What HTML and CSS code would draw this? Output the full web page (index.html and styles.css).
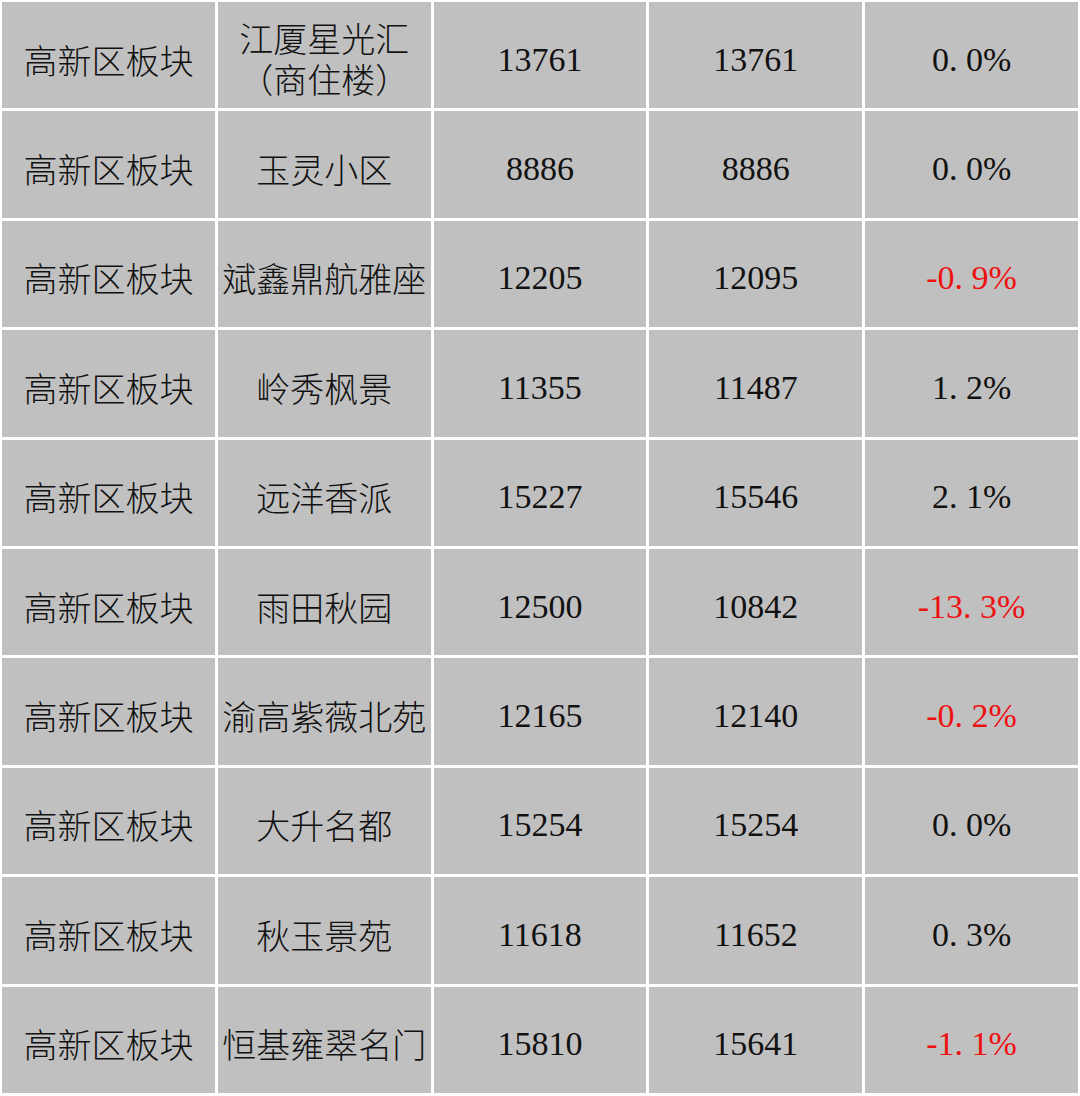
FILE: index.html
```html
<!DOCTYPE html>
<html lang="zh-CN">
<head>
<meta charset="utf-8">
<title>高新区板块</title>
<link rel="stylesheet" href="styles.css">
</head>
<body>
<div class="grid">
  <div class="cell name">高新区板块</div><div class="cell name two"><span class="line">江厦星光汇</span><span class="line">（商住楼）</span></div><div class="cell num">13761</div><div class="cell num">13761</div><div class="cell num">0<span class="dot">.</span>0%</div>
  <div class="cell name">高新区板块</div><div class="cell name">玉灵小区</div><div class="cell num">8886</div><div class="cell num">8886</div><div class="cell num">0<span class="dot">.</span>0%</div>
  <div class="cell name">高新区板块</div><div class="cell name">斌鑫鼎航雅座</div><div class="cell num">12205</div><div class="cell num">12095</div><div class="cell num neg">-0<span class="dot">.</span>9%</div>
  <div class="cell name">高新区板块</div><div class="cell name">岭秀枫景</div><div class="cell num">11355</div><div class="cell num">11487</div><div class="cell num">1<span class="dot">.</span>2%</div>
  <div class="cell name">高新区板块</div><div class="cell name">远洋香派</div><div class="cell num">15227</div><div class="cell num">15546</div><div class="cell num">2<span class="dot">.</span>1%</div>
  <div class="cell name">高新区板块</div><div class="cell name">雨田秋园</div><div class="cell num">12500</div><div class="cell num">10842</div><div class="cell num neg">-13<span class="dot">.</span>3%</div>
  <div class="cell name">高新区板块</div><div class="cell name">渝高紫薇北苑</div><div class="cell num">12165</div><div class="cell num">12140</div><div class="cell num neg">-0<span class="dot">.</span>2%</div>
  <div class="cell name">高新区板块</div><div class="cell name">大升名都</div><div class="cell num">15254</div><div class="cell num">15254</div><div class="cell num">0<span class="dot">.</span>0%</div>
  <div class="cell name">高新区板块</div><div class="cell name">秋玉景苑</div><div class="cell num">11618</div><div class="cell num">11652</div><div class="cell num">0<span class="dot">.</span>3%</div>
  <div class="cell name">高新区板块</div><div class="cell name">恒基雍翠名门</div><div class="cell num">15810</div><div class="cell num">15641</div><div class="cell num neg">-1<span class="dot">.</span>1%</div>
</div>
</body>
</html>
```
FILE: styles.css
```css
html, body {
  margin: 0;
  padding: 0;
  background: #ffffff;
}

.grid {
  width: 1080px;
  height: 1096px;
  box-sizing: border-box;
  padding: 2px 2px 3px 2px;
  display: grid;
  grid-template-columns: repeat(5, 1fr);
  grid-template-rows: repeat(10, 1fr);
  gap: 3px;
}

.cell {
  background: #c0c0c0;
  display: flex;
  align-items: center;
  justify-content: center;
  text-align: center;
  box-sizing: border-box;
  padding-top: 8px;
  color: #111111;
  font-size: 34px;
  line-height: 41px;
  white-space: nowrap;
}

.name {
  font-family: "Noto Sans CJK SC", "Noto Sans CJK JP", sans-serif;
  font-weight: 300;
}

.two {
  flex-direction: column;
  gap: 0;
  padding-top: 6px;
}

.two .line {
  display: block;
  height: 41px;
  line-height: 41px;
}

.num {
  font-family: "Liberation Serif", "DejaVu Serif", serif;
  font-size: 34px;
}

.dot {
  display: inline-block;
  width: 0.5em;
  text-align: left;
}

.neg {
  color: #ee1111;
}
```
